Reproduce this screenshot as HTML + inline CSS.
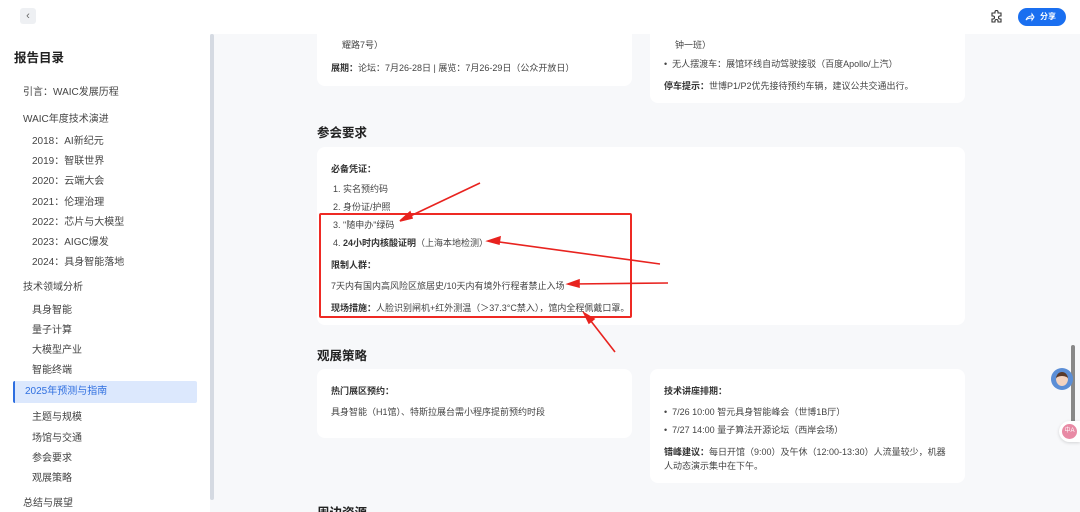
<!DOCTYPE html>
<html><head><meta charset="utf-8"><style>
*{margin:0;padding:0;box-sizing:border-box}
html,body{width:1080px;height:512px;overflow:hidden}
body{background:#f7f8fa;font-family:"Liberation Sans","Noto Sans CJK SC",sans-serif;color:#333;position:relative}
.hdr{position:absolute;left:0;top:0;width:1080px;height:34px;background:#fff;z-index:5}
.back{position:absolute;left:20px;top:8px;width:16px;height:16px;background:#eef0f3;border-radius:3px;font-size:11px;color:#666;text-align:center;line-height:16px}
.share{position:absolute;left:1018px;top:8px;width:48px;height:18px;background:#1a6ff0;border-radius:9px;color:#fff;font-size:8px;font-weight:bold;line-height:18px;padding-left:22px}
.side{position:absolute;left:0;top:34px;width:210px;height:478px;background:#fff}
.sb{position:absolute;left:210px;top:34px;width:4px;height:466px;background:#d5dae2;border-radius:2px}
.side .t{position:absolute;left:14px;top:13px;font-size:12.5px;font-weight:bold;color:#222}
.it{position:absolute;font-size:10px;color:#444;white-space:nowrap}
.act{position:absolute;left:13px;top:347px;width:184px;height:22px;background:#dce8fd;border-left:2px solid #2f6fe0;border-radius:2px;color:#2f6fe0;font-size:10px;line-height:22px;padding-left:10px}
.card{position:absolute;background:#fff;border-radius:8px}
.h2{position:absolute;font-size:12.5px;font-weight:bold;color:#222}
.tx{position:absolute;font-size:9px;color:#444;white-space:nowrap}
b{color:#333}
.red{position:absolute;left:319px;top:213px;width:313px;height:105px;border:2px solid #ee2a24;border-radius:2px}
</style></head><body>
<div class="hdr"><div class="back">‹</div>
<svg style="position:absolute;left:990px;top:10px" width="14" height="14" viewBox="0 0 14 14"><path d="M5 2a1.5 1.5 0 0 1 3 0v1h3v3h-1a1.5 1.5 0 0 0 0 3h1v3H8v-1a1.5 1.5 0 0 0-3 0v1H2V9h1a1.5 1.5 0 0 0 0-3H2V3h3z" fill="none" stroke="#333" stroke-width="1.1"/></svg>
<div class="share">分享</div>
<svg style="position:absolute;left:1025px;top:12px;z-index:6" width="10" height="10" viewBox="0 0 10 10"><path d="M1 8c1-3 3-4 6-4V2l2 3-2 3V6c-2 0-4 0-6 2z" fill="none" stroke="#fff" stroke-width="1"/></svg>
</div>
<div class="side"><div class="t">报告目录</div>
<div class="it" style="left:23px;top:49px">引言：WAIC发展历程</div>
<div class="it" style="left:23px;top:76px">WAIC年度技术演进</div>
<div class="it" style="left:32px;top:98px">2018：AI新纪元</div>
<div class="it" style="left:32px;top:118px">2019：智联世界</div>
<div class="it" style="left:32px;top:138px">2020：云端大会</div>
<div class="it" style="left:32px;top:159px">2021：伦理治理</div>
<div class="it" style="left:32px;top:179px">2022：芯片与大模型</div>
<div class="it" style="left:32px;top:199px">2023：AIGC爆发</div>
<div class="it" style="left:32px;top:219px">2024：具身智能落地</div>
<div class="it" style="left:23px;top:244px">技术领域分析</div>
<div class="it" style="left:32px;top:267px">具身智能</div>
<div class="it" style="left:32px;top:287px">量子计算</div>
<div class="it" style="left:32px;top:307px">大模型产业</div>
<div class="it" style="left:32px;top:327px">智能终端</div>
<div class="act">2025年预测与指南</div>
<div class="it" style="left:32px;top:374px">主题与规模</div>
<div class="it" style="left:32px;top:395px">场馆与交通</div>
<div class="it" style="left:32px;top:415px">参会要求</div>
<div class="it" style="left:32px;top:435px">观展策略</div>
<div class="it" style="left:23px;top:460px">总结与展望</div>
</div>
<div class="sb"></div>

<div class="card" style="left:317px;top:20px;width:315px;height:66px"></div>
<div class="tx" style="left:342px;top:38px">耀路7号）</div>
<div class="tx" style="left:331px;top:61px"><b>展期：</b>论坛：7月26-28日 | 展览：7月26-29日（公众开放日）</div>
<div class="card" style="left:650px;top:20px;width:315px;height:83px"></div>
<div class="tx" style="left:675px;top:38px">钟一班）</div>
<div class="tx" style="left:664px;top:57px">•&nbsp; 无人摆渡车：展馆环线自动驾驶接驳（百度Apollo/上汽）</div>
<div class="tx" style="left:664px;top:79px"><b>停车提示：</b>世博P1/P2优先接待预约车辆，建议公共交通出行。</div>

<div class="h2" style="left:317px;top:122px">参会要求</div>
<div class="card" style="left:317px;top:147px;width:648px;height:178px"></div>
<div class="tx" style="left:331px;top:162px"><b>必备凭证：</b></div>
<div class="tx" style="left:333px;top:182px">1. 实名预约码</div>
<div class="tx" style="left:333px;top:200px">2. 身份证/护照</div>
<div class="tx" style="left:333px;top:218px">3. "随申办"绿码</div>
<div class="tx" style="left:333px;top:236px">4. <b>24小时内核酸证明</b>（上海本地检测）</div>
<div class="tx" style="left:331px;top:258px"><b>限制人群：</b></div>
<div class="tx" style="left:331px;top:279px">7天内有国内高风险区旅居史/10天内有境外行程者禁止入场</div>
<div class="tx" style="left:331px;top:301px"><b>现场措施：</b>人脸识别闸机+红外测温（＞37.3°C禁入），馆内全程佩戴口罩。</div>
<div class="red"></div>
<svg style="position:absolute;left:0;top:0" width="1080" height="512"><g stroke="#e8231f" stroke-width="1.6" fill="#e8231f">
<line x1="480" y1="183" x2="404" y2="219"/><path d="M400 221l10-9 2 6z"/>
<line x1="660" y1="264" x2="492" y2="241"/><path d="M488 241l12-4-1 7z"/>
<line x1="668" y1="283" x2="572" y2="284"/><path d="M568 284l11-4 0 7z"/>
<line x1="615" y1="352" x2="587" y2="316"/><path d="M584 313l10 6-5 4z"/>
</g></svg>

<div class="h2" style="left:317px;top:345px">观展策略</div>
<div class="card" style="left:317px;top:369px;width:315px;height:69px"></div>
<div class="tx" style="left:331px;top:384px"><b>热门展区预约：</b></div>
<div class="tx" style="left:331px;top:405px">具身智能（H1馆）、特斯拉展台需小程序提前预约时段</div>
<div class="card" style="left:650px;top:369px;width:315px;height:114px"></div>
<div class="tx" style="left:664px;top:384px"><b>技术讲座排期：</b></div>
<div class="tx" style="left:664px;top:405px">•&nbsp; 7/26 10:00 智元具身智能峰会（世博1B厅）</div>
<div class="tx" style="left:664px;top:423px">•&nbsp; 7/27 14:00 量子算法开源论坛（西岸会场）</div>
<div class="tx" style="left:664px;top:445px"><b>错峰建议：</b>每日开馆（9:00）及午休（12:00-13:30）人流量较少，机器</div>
<div class="tx" style="left:664px;top:459px">人动态演示集中在下午。</div>
<div class="h2" style="left:317px;top:502px">周边资源</div>

<div style="position:absolute;left:1071px;top:345px;width:4px;height:80px;background:#888;border-radius:2px"></div>
<div style="position:absolute;left:1051px;top:368px;width:22px;height:22px;border-radius:50%;background:#5b8ed6;overflow:hidden"><div style="position:absolute;left:5px;top:4px;width:12px;height:14px;border-radius:50%;background:#f3d3c0;border-top:4px solid #5a3a2a"></div></div>
<div style="position:absolute;left:1059px;top:421px;width:21px;height:21px;border-radius:50% 0 0 50%;background:#fff;box-shadow:0 1px 3px rgba(0,0,0,.15)"><div style="margin:3px;width:15px;height:15px;border-radius:50%;background:#e88aa5;color:#fff;font-size:6px;text-align:center;line-height:15px">中A</div></div>
</body></html>
